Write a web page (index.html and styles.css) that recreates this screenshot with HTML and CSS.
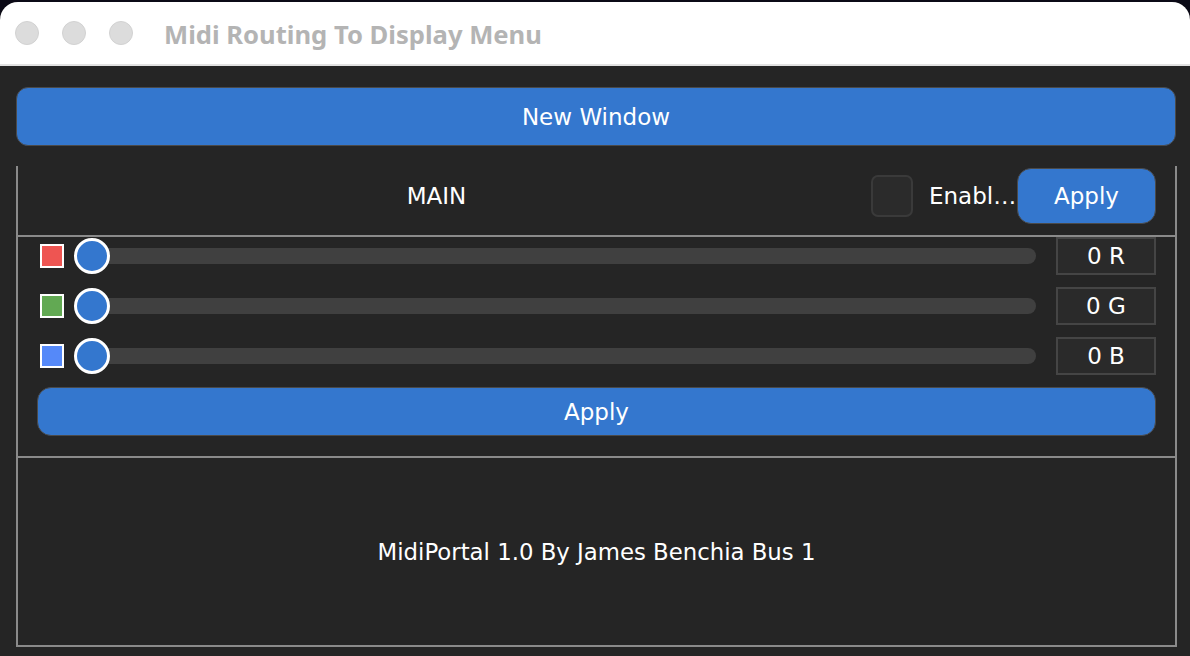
FILE: index.html
```html
<!DOCTYPE html>
<html>
<head>
<meta charset="utf-8">
<link rel="stylesheet" href="styles.css">
</head>
<body>
<div class="window">
  <div class="titlebar">
    <span class="light"></span><span class="light"></span><span class="light"></span>
    <span class="title">Midi Routing To Display Menu</span>
  </div>
  <div class="content">
    <div class="btn btn-wide">New Window</div>
    <div class="panel">
      <div class="toprow">
        <div class="main-label">MAIN</div>
        <div class="checkbox"></div>
        <div class="enable">Enabl…</div>
        <div class="btn btn-apply">Apply</div>
      </div>
      <div class="sliders">
        <div class="srow">
          <span class="swatch red"></span>
          <div class="slider"><div class="track"></div><div class="knob"></div></div>
          <div class="value">0 R</div>
        </div>
        <div class="srow">
          <span class="swatch green"></span>
          <div class="slider"><div class="track"></div><div class="knob"></div></div>
          <div class="value">0 G</div>
        </div>
        <div class="srow">
          <span class="swatch blue"></span>
          <div class="slider"><div class="track"></div><div class="knob"></div></div>
          <div class="value">0 B</div>
        </div>
        <div class="btn btn-apply2">Apply</div>
      </div>
      <div class="footer">MidiPortal 1.0 By James Benchia Bus 1</div>
    </div>
  </div>
</div>
</body>
</html>
```
FILE: styles.css
```css
html, body {
  margin: 0;
  padding: 0;
  background: #0b0a16;
  width: 1190px;
  height: 656px;
  overflow: hidden;
  font-family: "DejaVu Sans", "Noto Sans", sans-serif;
}
.window {
  margin-top: 2px;
  width: 1190px;
  height: 672px;
  border-radius: 18px;
  overflow: hidden;
  background: #252525;
}
.titlebar {
  height: 62px;
  background: #ffffff;
  border-bottom: 2px solid #e2e2e2;
  display: flex;
  align-items: center;
  padding-left: 15px;
}
.light {
  width: 22px;
  height: 22px;
  border-radius: 50%;
  background: #dcdcdc;
  border: 1px solid #d2d2d2;
  margin-right: 23px;
}
.light:nth-child(3) { margin-right: 31px; }
.title {
  font-family: "Noto Sans", "Open Sans", sans-serif;
  font-weight: 700;
  font-size: 25.6px;
  color: #b4b4b4;
  margin-top: 2px;
}
.content {
  padding: 21px 13px 0 16px;
}
.btn {
  background: #3477ce;
  border: 1px solid #4a4a4a;
  color: #ffffff;
  display: flex;
  align-items: center;
  justify-content: center;
  font-size: 23px;
  box-sizing: border-box;
}
.btn-wide {
  height: 59px;
  width: 1160px;
  border-radius: 12px;
}
.panel {
  margin-top: 20px;
  border-left: 2px solid #8a8a8a;
  border-right: 2px solid #8a8a8a;
  border-bottom: 2px solid #8a8a8a;
  width: 1161px;
  box-sizing: border-box;
}
.toprow {
  height: 71px;
  border-bottom: 2px solid #8a8a8a;
  display: flex;
  align-items: flex-start;
  padding-top: 2px;
  padding-right: 19px;
  box-sizing: border-box;
}
.main-label {
  flex: 1;
  text-align: center;
  font-size: 23px;
  color: #ffffff;
  line-height: 57px;
}
.checkbox {
  margin-top: 7px;
  margin-left: 16px;
  width: 42px;
  height: 42px;
  box-sizing: border-box;
  border: 2px solid #3a3a3a;
  background: #2b2b2b;
  border-radius: 7px;
  margin-right: 16px;
}
.enable {
  font-size: 23px;
  color: #ffffff;
  line-height: 57px;
  width: 88px;
  white-space: nowrap;
  overflow: hidden;
}
.btn-apply {
  width: 139px;
  height: 56px;
  border-radius: 14px;
}
.sliders {
  padding: 0 19px 20px 19px;
  border-bottom: 2px solid #8a8a8a;
  display: flex;
  flex-direction: column;
  gap: 12px;
}
.srow {
  height: 38px;
  display: flex;
  align-items: center;
  padding-left: 3px;
}
.swatch {
  width: 24px;
  height: 24px;
  box-sizing: border-box;
  border: 2px solid #ffffff;
  margin-right: 10px;
}
.red { background: #ee5552; }
.green { background: #62a953; }
.blue { background: #5589f9; }
.slider {
  position: relative;
  flex: 1;
  height: 38px;
  display: flex;
  align-items: center;
  margin-right: 20px;
}
.track {
  flex: 1;
  height: 16px;
  border-radius: 8px;
  background: #404040;
  margin-left: 18px;
}
.knob {
  position: absolute;
  left: 0;
  top: 1px;
  width: 36px;
  height: 36px;
  box-sizing: border-box;
  border-radius: 50%;
  background: #3477ce;
  border: 3px solid #ffffff;
}
.value {
  width: 100px;
  height: 38px;
  box-sizing: border-box;
  border: 2px solid #454545;
  background: #2a2a2a;
  color: #ffffff;
  font-size: 23px;
  display: flex;
  align-items: center;
  justify-content: center;
}
.btn-apply2 {
  height: 49px;
  border-radius: 14px;
}
.footer {
  height: 187px;
  display: flex;
  align-items: center;
  justify-content: center;
  color: #ffffff;
  font-size: 22.8px;
}
```
